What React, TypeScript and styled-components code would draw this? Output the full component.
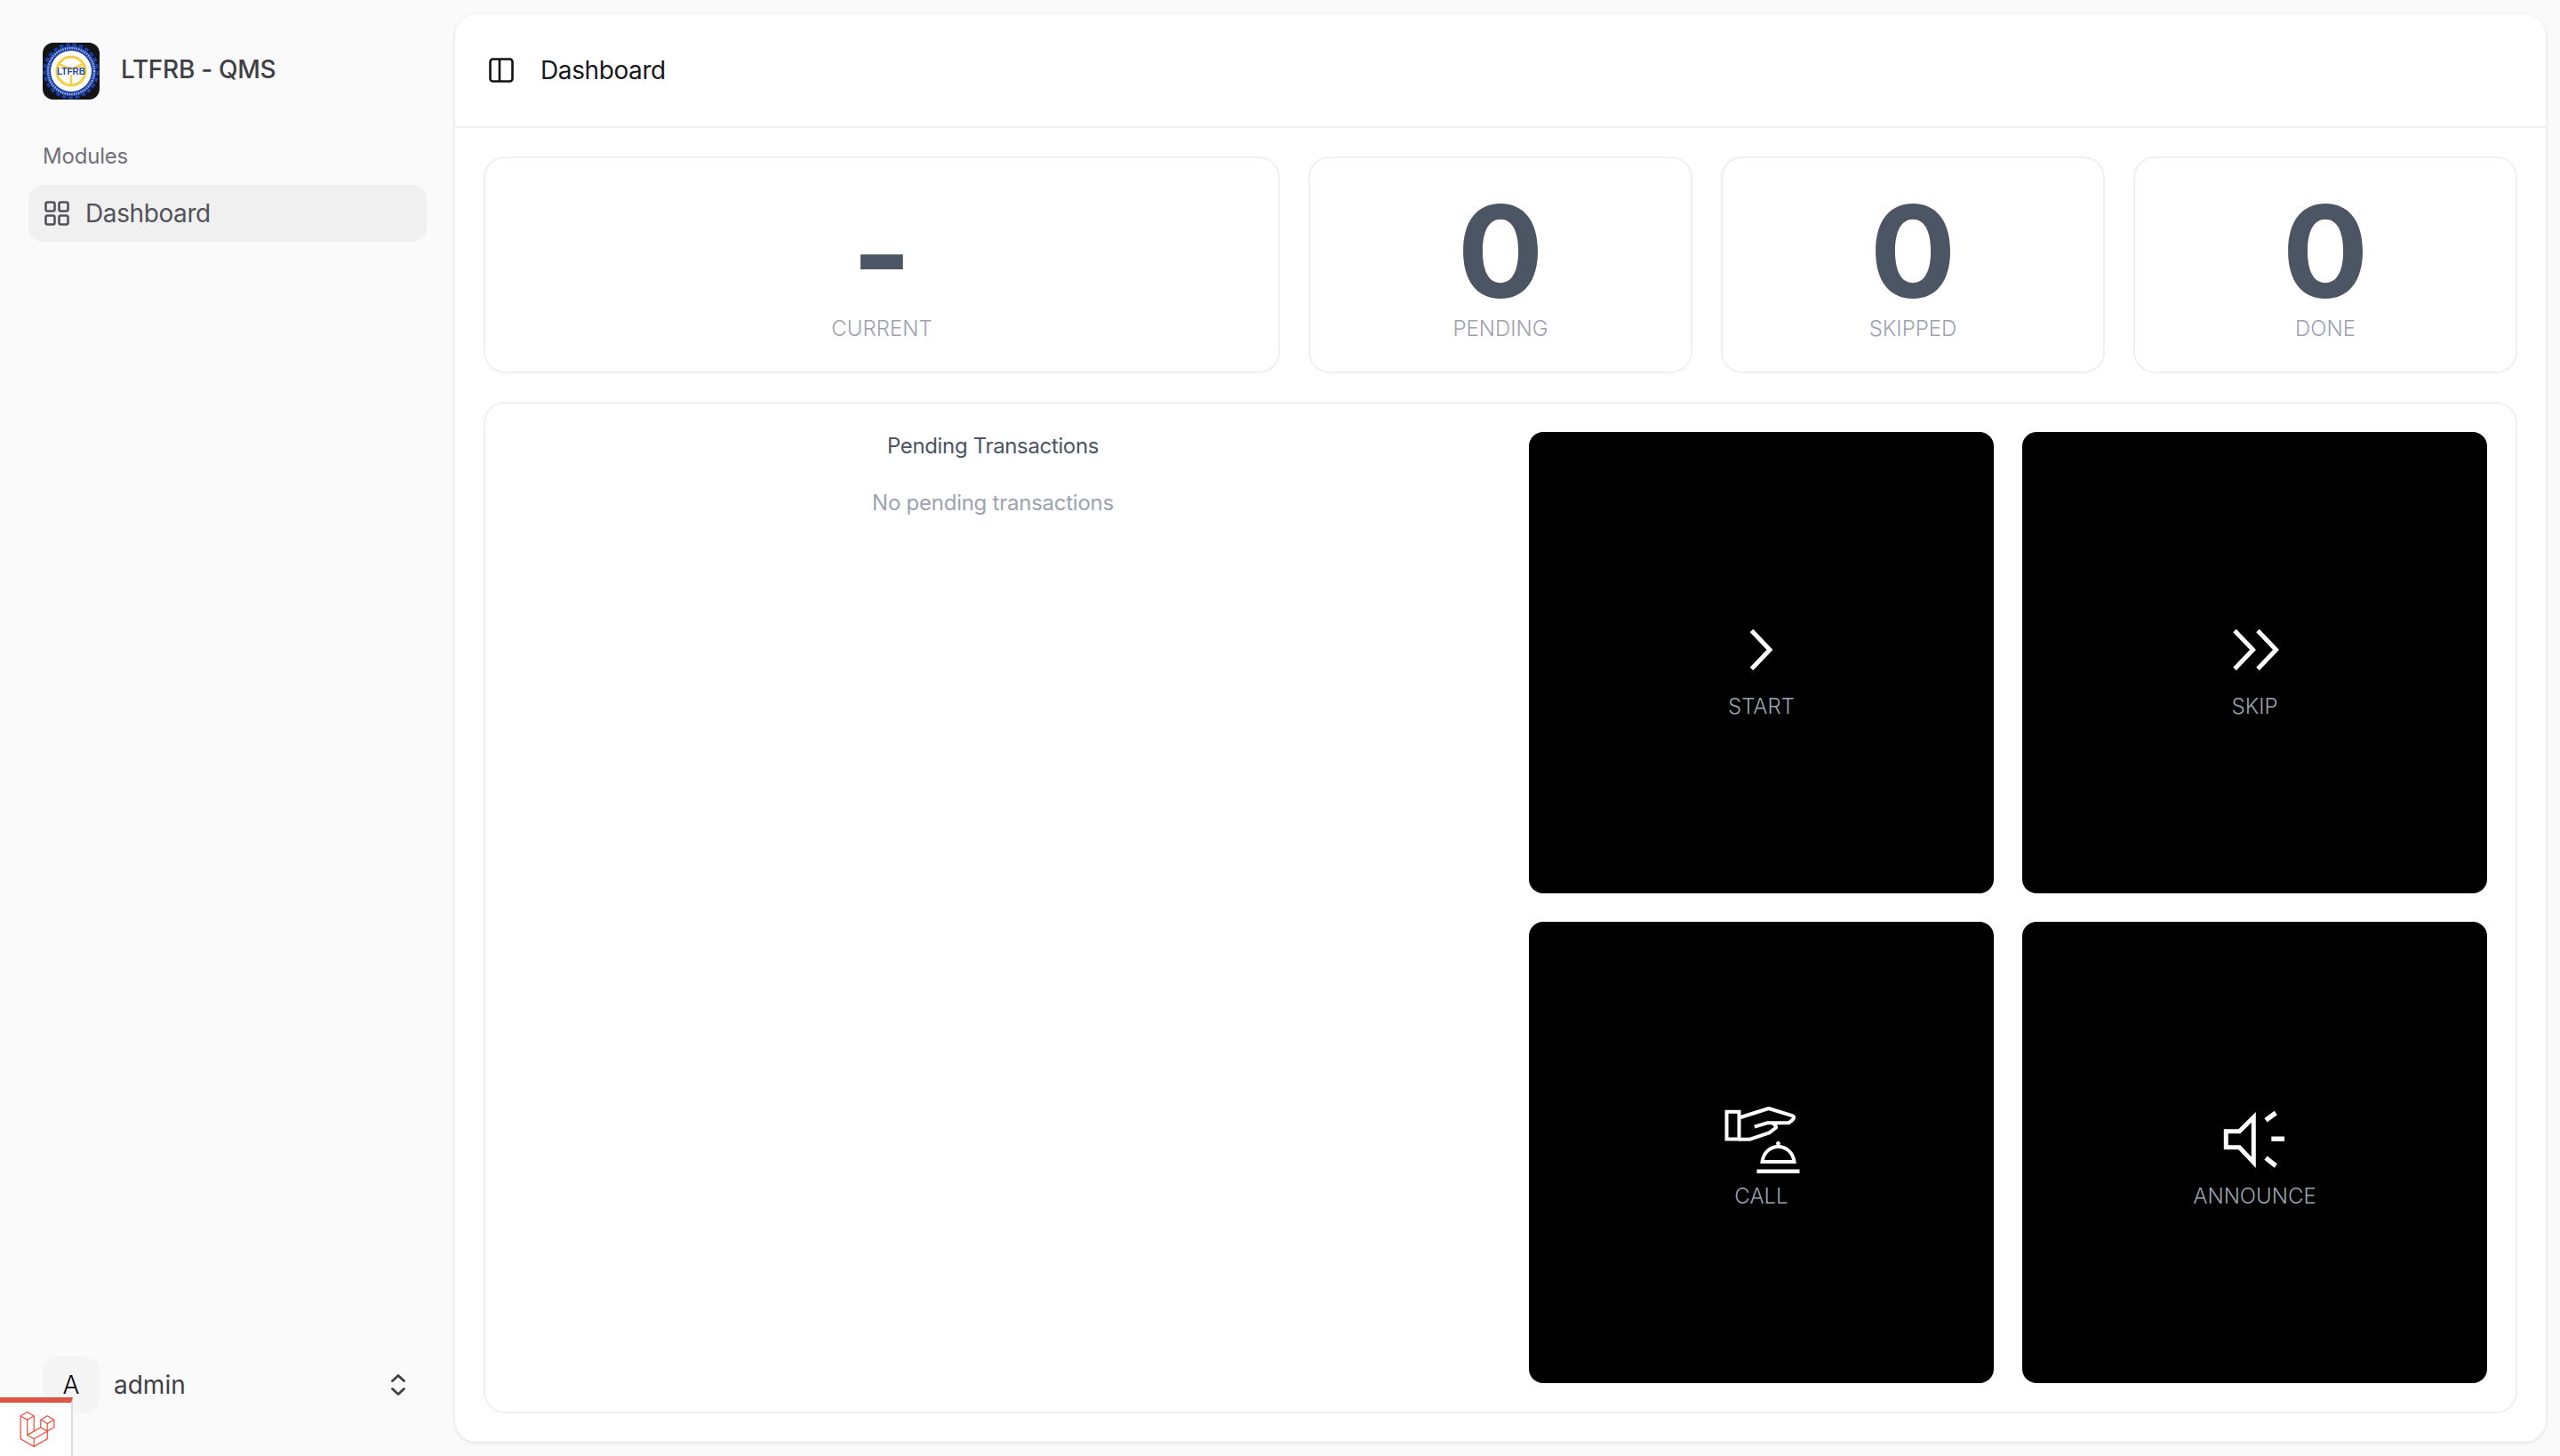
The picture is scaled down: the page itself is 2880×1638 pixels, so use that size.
import React from "react";
import styled, { createGlobalStyle } from "styled-components";
import { SiLaravel } from "react-icons/si";

const Global = createGlobalStyle`
  html, body { margin: 0; padding: 0; background: #fafafa; }
  body { font-family: Inter, "Liberation Sans", sans-serif; }
  * { box-sizing: border-box; }
`;
const Shell = styled.div`
  display: flex; width: 2880px; height: 1638px; background: #fafafa; overflow: hidden; position: relative;
`;
const Sidebar = styled.aside`
  width: 512px; flex: none; display: flex; flex-direction: column; padding: 48px 32px 48px;
`;
const Brand = styled.div`
  display: flex; align-items: center; gap: 24px; padding: 0 16px; height: 64px;
`;
const BrandName = styled.span`
  font-size: 28px; font-weight: 500; color: #3f3f46; letter-spacing: -0.3px; line-height: 1; margin-top: -4px;
`;
const GroupLabel = styled.div`
  font-size: 24px; font-weight: 400; color: #71717a; margin: 48px 0 0 16px; height: 32px; line-height: 32px; letter-spacing: -0.2px;
`;
const NavItem = styled.div`
  display: flex; align-items: center; gap: 18px; height: 64px; margin-top: 16px; padding: 0 18px;
  border-radius: 16px; background: #f0f0f0; color: #52525b; font-size: 28px; font-weight: 400; letter-spacing: -0.4px;
`;
const Spacer = styled.div`flex: 1;`;
const UserRow = styled.div`
  display: flex; align-items: center; padding: 0 24px 0 16px; height: 64px;
`;
const Avatar = styled.div`
  width: 64px; height: 64px; border-radius: 16px; background: #f5f5f5; color: #09090b; font-size: 28px;
  display: flex; align-items: center; justify-content: center; flex: none; font-weight: 300;
`;
const UserName = styled.span`
  font-size: 28px; color: #3f3f46; margin-left: 16px; flex: 1; font-weight: 400;
`;
const DevBadge = styled.div`
  position: absolute; left: 0; bottom: 0; width: 82px; height: 66px; background: #fff; color: #f05340;
  border-top: 6px solid #dd5541; border-right: 2px solid #dcdcdc; display: flex; align-items: center; justify-content: center; padding-left: 4px;
`;
const Main = styled.main`
  flex: none; width: 2352px; height: 1606px; margin-top: 16px; background: #fff; border-radius: 24px;
  box-shadow: 0 1px 4px rgba(0,0,0,.12); display: flex; flex-direction: column;
`;
const Header = styled.header`
  height: 128px; flex: none; display: flex; align-items: center; gap: 30px; padding: 0 38px; border-bottom: 2px solid #f0f0f0;
`;
const HeaderTitle = styled.span`
  font-size: 28px; color: #18181b; font-weight: 400; letter-spacing: -0.4px;
`;
const Content = styled.div`
  flex: 1; display: flex; flex-direction: column; gap: 32px; padding: 32px;
`;
const Stats = styled.div`
  display: grid; grid-template-columns: 896px 1fr 1fr 1fr; gap: 32px; height: 244px;
`;
const StatCard = styled.div`
  border: 2px solid #f0f0f0; border-radius: 24px; display: flex; flex-direction: column; align-items: center;
`;
const StatValue = styled.div<{ $dash?: boolean }>`
  font-size: 144px; font-weight: 700; line-height: 120px; height: 120px; color: #4b5563;
  margin-top: ${(p) => (p.$dash ? "48px" : "45px")};
  margin-bottom: ${(p) => (p.$dash ? "8px" : "11px")};
`;
const StatLabel = styled.div`
  font-size: 24px; color: #9ca3af; font-weight: 300; line-height: 32px;
`;
const Panel = styled.section`
  flex: 1; border: 2px solid #f0f0f0; border-radius: 24px; display: grid; grid-template-columns: 1fr 1078px; gap: 32px; padding: 32px 32px 32px 0;
`;
const PendingColumn = styled.div`
  display: flex; flex-direction: column; align-items: center;
`;
const PendingTitle = styled.div`
  font-size: 24px; color: #4b5563; line-height: 32px; font-weight: 400; letter-spacing: -0.35px;
`;
const PendingEmpty = styled.div`
  font-size: 24px; color: #9ca3af; line-height: 32px; margin-top: 32px; font-weight: 400; letter-spacing: -0.25px;
`;
const Actions = styled.div`
  display: grid; grid-template-columns: 1fr 1fr; grid-template-rows: 1fr 1fr; gap: 32px;
`;
const ActionButton = styled.button`
  background: #000; border: 0; border-radius: 16px; display: flex; flex-direction: column; align-items: center; justify-content: center;
  color: #fff; padding: 3px 0 0; font-family: inherit;
`;
const ActionLabel = styled.span`
  font-size: 24px; font-weight: 300; color: #9ca3af; line-height: 32px;
`;

const Logo = () => (
  <svg width="64" height="64" viewBox="0 0 64 64">
    <rect width="64" height="64" rx="12" fill="#141416" />
    <circle cx="32" cy="32" r="28.5" fill="#1c41a8" />
    <circle cx="32" cy="32" r="30" fill="none" stroke="#1c41a8" strokeWidth="3" strokeDasharray="5 2.5" />
    <circle cx="32" cy="32" r="26" fill="none" stroke="#d5ddf3" strokeWidth="2.4" strokeDasharray="1.4 1.2" opacity=".75" />
    <circle cx="32" cy="32" r="23" fill="#fff" />
    <circle cx="32" cy="32" r="16" fill="none" stroke="#f4cf45" strokeWidth="3.2" />
    <path d="M18 24 L32 30 L46 24 M32 36 V48" fill="none" stroke="#f4cf45" strokeWidth="2.6" />
    <text x="32" y="36" textAnchor="middle" fontSize="10" fontWeight="700" fill="#2549a8" fontFamily="Liberation Sans, sans-serif">LTFRB</text>
  </svg>
);

const GridIcon = () => (
  <svg width="28" height="28" viewBox="0 0 28 28" fill="none" stroke="#52525b" strokeWidth="2.6">
    <rect x="1.5" y="1.5" width="10" height="10" rx="2" />
    <rect x="16.5" y="1.5" width="10" height="10" rx="2" />
    <rect x="1.5" y="16.5" width="10" height="10" rx="2" />
    <rect x="16.5" y="16.5" width="10" height="10" rx="2" />
  </svg>
);
const Selector = () => (
  <svg width="16" height="24" viewBox="0 0 16 24" fill="none" stroke="#3f3f46" strokeWidth="2.8" strokeLinecap="round" strokeLinejoin="round">
    <path d="M1.5 7.5 L8 1.5 L14.5 7.5 M1.5 16.5 L8 22.5 L14.5 16.5" />
  </svg>
);
const PanelIcon = () => (
  <svg width="28" height="28" viewBox="0 0 28 28" fill="none" stroke="#111" strokeWidth="2.6">
    <rect x="1.5" y="1.5" width="25" height="25" rx="3" />
    <path d="M12 2 V26" />
  </svg>
);
const IconSvg = styled.svg`
  width: 96px; height: 96px; flex: none; display: block; color: #fff;
`;
const StartIcon = () => (
  <IconSvg viewBox="0 0 96 96" fill="none" stroke="currentColor" strokeWidth="5">
    <path d="M36.5 26.5 L57 48 L36.5 69.5" />
  </IconSvg>
);
const SkipIcon = () => (
  <IconSvg viewBox="0 0 96 96" fill="none" stroke="currentColor" strokeWidth="5">
    <path d="M25 26.5 L45.5 48 L25 69.5 M51 26.5 L71.5 48 L51 69.5" />
  </IconSvg>
);
const CallIcon = () => (
  <IconSvg viewBox="0 0 96 96" fill="none" stroke="currentColor" strokeWidth="4">
    <path d="M8.5 16.7 H22.5 V47.5 H8.5 Z" />
    <path d="M22.5 23.5 L55.8 13 L83 21.3 Q86.5 24 78.2 29.3 H59.8 Q65.5 33 63.5 35 L56.5 40.3 L34.8 47.7 H22.5 M39.8 33.7 L53.8 29.3 H59.8" strokeLinejoin="round" />
    <path d="M48.5 73 C 50 62, 58 56, 66.5 56 C 75 56, 83 62, 84.5 73 Z" />
    <circle cx="66.5" cy="52.5" r="2.4" fill="currentColor" stroke="none" />
    <path d="M42.5 83.7 H90.5" strokeWidth="4.6" />
  </IconSvg>
);
const AnnounceIcon = () => (
  <IconSvg viewBox="0 0 96 96" fill="none" stroke="currentColor" strokeWidth="5">
    <path d="M15.3 38.7 H30.3 L46.3 23 V73.7 L30.3 56.7 H15.3 Z" />
    <path d="M60 26.3 L71.3 18 M66.3 47.3 H81 M60 68.7 L71.3 77.7" strokeWidth="5.4" />
  </IconSvg>
);

const stats = [["-", "CURRENT"], ["0", "PENDING"], ["0", "SKIPPED"], ["0", "DONE"]];
const actions: [React.FC, string][] = [[StartIcon, "START"], [SkipIcon, "SKIP"], [CallIcon, "CALL"], [AnnounceIcon, "ANNOUNCE"]];

export default function App() {
  return (
    <Shell>
      <Global />
      <Sidebar>
        <Brand><Logo /><BrandName>LTFRB - QMS</BrandName></Brand>
        <GroupLabel>Modules</GroupLabel>
        <NavItem><GridIcon />Dashboard</NavItem>
        <Spacer />
        <UserRow>
          <Avatar>A</Avatar>
          <UserName>admin</UserName>
          <Selector />
        </UserRow>
      </Sidebar>
      <Main>
        <Header><PanelIcon /><HeaderTitle>Dashboard</HeaderTitle></Header>
        <Content>
          <Stats>
            {stats.map(([v, l]) => (
              <StatCard key={l}><StatValue $dash={v === "-"}>{v}</StatValue><StatLabel>{l}</StatLabel></StatCard>
            ))}
          </Stats>
          <Panel>
            <PendingColumn>
              <PendingTitle>Pending Transactions</PendingTitle>
              <PendingEmpty>No pending transactions</PendingEmpty>
            </PendingColumn>
            <Actions>
              {actions.map(([I, l]) => (
                <ActionButton key={l}><I /><ActionLabel>{l}</ActionLabel></ActionButton>
              ))}
            </Actions>
          </Panel>
        </Content>
      </Main>
      <DevBadge><SiLaravel size={40} /></DevBadge>
    </Shell>
  );
}
